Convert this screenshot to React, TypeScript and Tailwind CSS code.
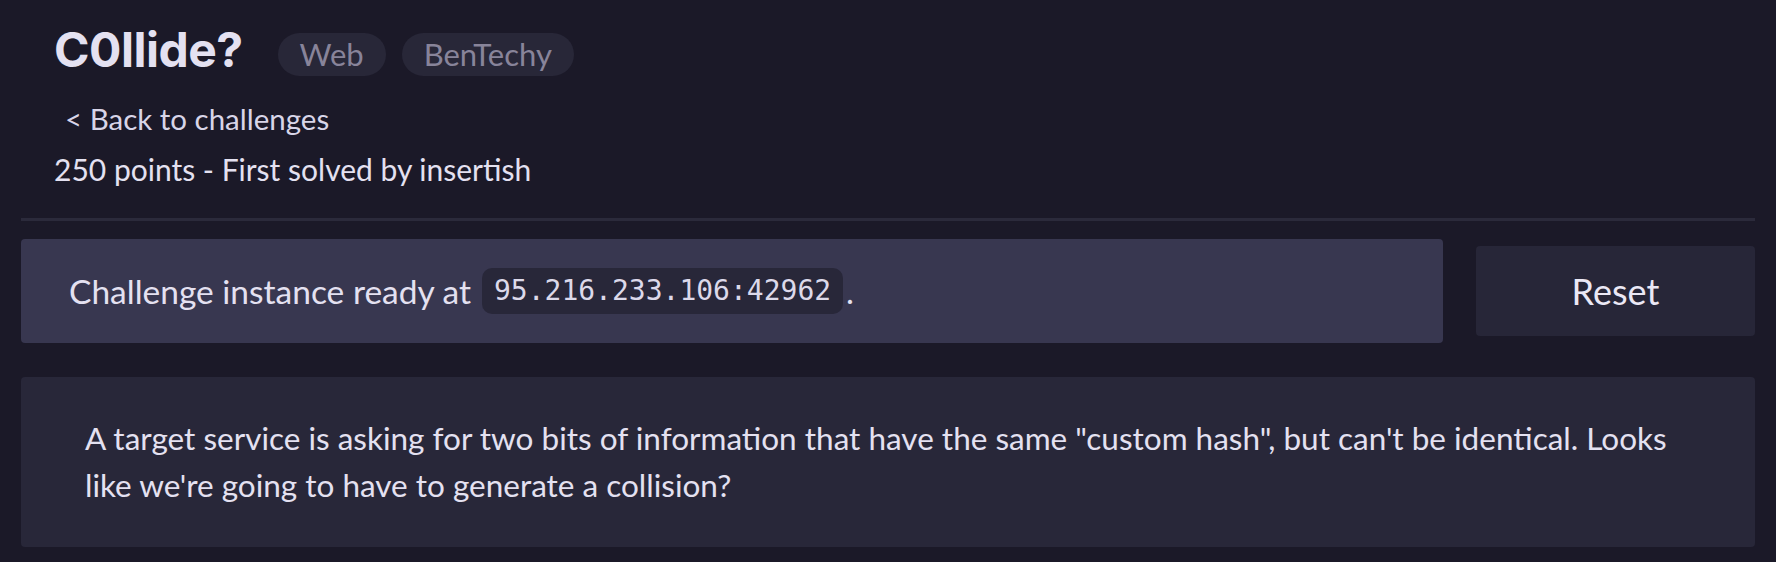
import React from "react";

const tags = ["Web", "BenTechy"];

export default function App() {
  return (
    <div className="min-h-screen w-full bg-[#1b1928] text-[#e4e1f1] px-[21px] pt-[26px] font-['Lato',sans-serif]">
      <div className="pl-[33px]">
        <div className="flex items-start gap-[35px]">
          <h1 className="font-['Inter',sans-serif] text-[48px] font-bold leading-[48px] tracking-[-0.5px]">C0llide?</h1>
          <div className="mt-[7px] flex items-center gap-[16px]">
            {tags.map((t) => (
              <span key={t} className="rounded-full bg-[#282738] px-[22px] h-[43px] flex items-center text-[31px] text-[#88849a]">
                {t}
              </span>
            ))}
          </div>
        </div>
        <a href="#" className="block mt-[23px] pl-[11px] text-[29.5px] leading-[40px] text-[#d8d5e8]">
          &lt; Back to challenges
        </a>
        <p className="mt-[10px] text-[30px] leading-[40px]">250 points - First solved by insertish</p>
      </div>

      <div className="mt-[29px] h-[3px] bg-[#2b2a3b]" />

      <div className="mt-[18px] flex items-center gap-[33px]">
        <div className="flex-1 h-[104px] flex items-center rounded-[4px] bg-[#383750] pl-[48px] text-[33.5px]">
          <span className="mr-[11px]">Challenge instance ready at</span>
          <code className="rounded-[10px] bg-[#282739] px-[12px] h-[46px] flex items-center font-['DejaVu_Sans_Mono',monospace] text-[28px] text-[#dcd9ea]">
            95.216.233.106:42962
          </code>
          <span className="ml-[3px]">.</span>
        </div>
        <button className="w-[279px] h-[90px] rounded-[4px] bg-[#272638] text-[36px] text-[#ebe8f5]">Reset</button>
      </div>

      <div className="mt-[34px] rounded-[4px] bg-[#282739] px-[64px] py-[38px] text-[31.5px] leading-[47px]">
        A target service is asking for two bits of information that have the same "custom hash", but can't be identical. Looks
        like we're going to have to generate a collision?
      </div>
    </div>
  );
}
